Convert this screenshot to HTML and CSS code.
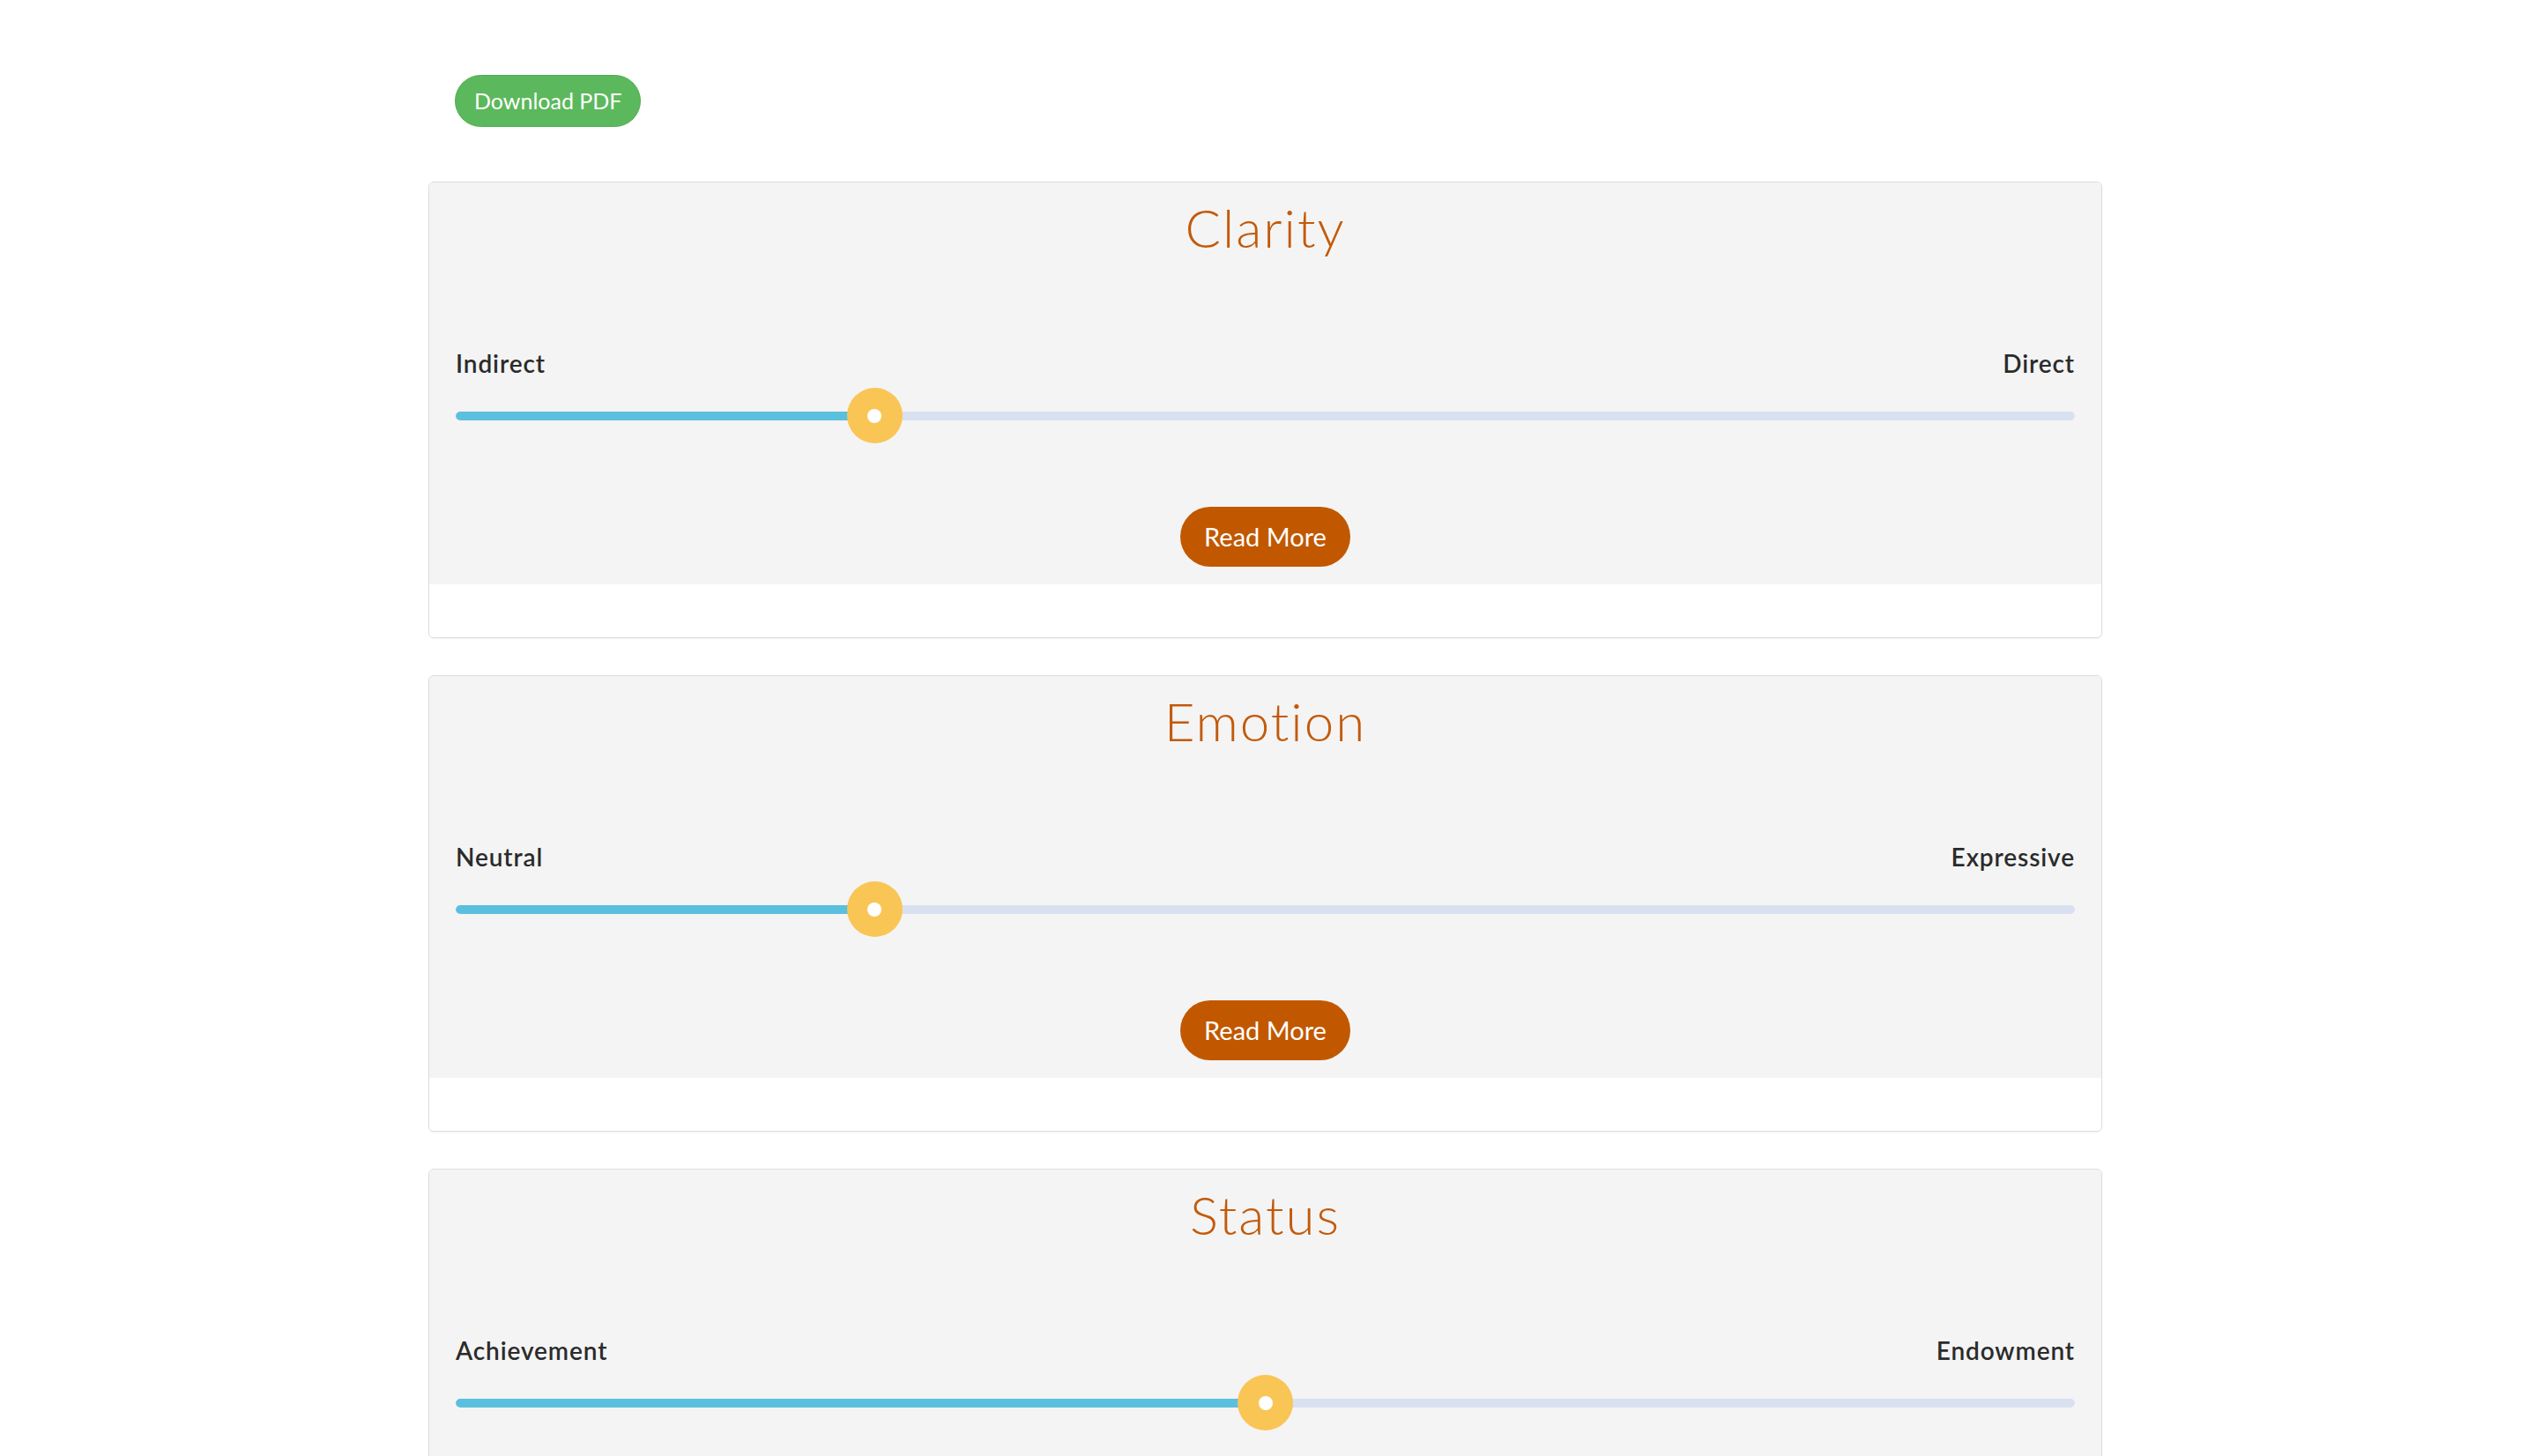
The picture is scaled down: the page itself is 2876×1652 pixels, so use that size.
FILE: index.html
```html
<!DOCTYPE html>
<html lang="en">
<head>
<meta charset="utf-8">
<title>Profile</title>
<link rel="stylesheet" href="styles.css">
</head>
<body>
<div class="container">
  <div class="toolbar">
    <button class="btn-pdf">Download PDF</button>
  </div>

  <div class="card">
    <div class="card-body">
      <h2 class="card-title">Clarity</h2>
      <div class="labels"><span>Indirect</span><span>Direct</span></div>
      <div class="slider" style="--v:0.25">
        <div class="track"><div class="fill"></div></div>
        <div class="thumb"></div>
      </div>
      <div class="actions"><button class="btn-more">Read More</button></div>
    </div>
    <div class="card-foot"></div>
  </div>

  <div class="card">
    <div class="card-body">
      <h2 class="card-title">Emotion</h2>
      <div class="labels"><span>Neutral</span><span>Expressive</span></div>
      <div class="slider" style="--v:0.25">
        <div class="track"><div class="fill"></div></div>
        <div class="thumb"></div>
      </div>
      <div class="actions"><button class="btn-more">Read More</button></div>
    </div>
    <div class="card-foot"></div>
  </div>

  <div class="card">
    <div class="card-body">
      <h2 class="card-title">Status</h2>
      <div class="labels"><span>Achievement</span><span>Endowment</span></div>
      <div class="slider" style="--v:0.5">
        <div class="track"><div class="fill"></div></div>
        <div class="thumb"></div>
      </div>
      <div class="actions"><button class="btn-more">Read More</button></div>
    </div>
    <div class="card-foot"></div>
  </div>
</div>
</body>
</html>
```

FILE: styles.css
```css
html, body {
  margin: 0;
  padding: 0;
  background: #ffffff;
}
body {
  font-family: Lato, "Open Sans", "Liberation Sans", sans-serif;
  color: #2b2b2b;
}
.container {
  width: 1899px;
  margin-left: 486px;
}
.toolbar {
  padding: 85px 0 0 30px;
  height: 59px;
  margin-bottom: 62px;
}
.btn-pdf {
  height: 59px;
  padding: 0 21px;
  border: 1px solid #4cae4c;
  border-radius: 30px;
  background: #5cb85c;
  color: #ffffff;
  font-family: Lato, "Open Sans", sans-serif;
  font-size: 25px;
  line-height: 57px;
  cursor: pointer;
}
.card {
  border: 1px solid #dddddd;
  border-radius: 6px;
  background: #ffffff;
  box-shadow: 0 1px 2px rgba(0,0,0,0.06);
  margin-bottom: 42px;
  overflow: hidden;
}
.card-body {
  background: #f4f4f4;
  padding: 15px 30px 20px 30px;
}
.card-title {
  margin: 0;
  text-align: center;
  font-weight: 300;
  font-size: 60px;
  line-height: 72px;
  letter-spacing: 2px;
  color: #c35a0a;
}
.labels {
  display: flex;
  justify-content: space-between;
  margin-top: 101px;
  font-size: 28px;
  line-height: 34px;
  font-weight: 600;
  letter-spacing: 0.9px;
  color: #2b2b2b;
}
.slider {
  position: relative;
  height: 63px;
  margin-top: 11px;
  display: flex;
  align-items: center;
}
.track {
  width: 100%;
  height: 10px;
  border-radius: 5px;
  background: #d9e1f1;
  overflow: hidden;
}
.fill {
  height: 100%;
  width: calc(31.5px + var(--v) * (100% - 63px));
  background: #5bc0de;
  border-radius: 5px 0 0 5px;
}
.thumb {
  position: absolute;
  top: 0;
  left: calc(var(--v) * (100% - 63px));
  width: 63px;
  height: 63px;
  border-radius: 50%;
  background: #f9c555;
  display: flex;
  align-items: center;
  justify-content: center;
}
.thumb::after {
  content: "";
  width: 16px;
  height: 16px;
  border-radius: 50%;
  background: #ffffff;
}
.actions {
  display: flex;
  justify-content: center;
  margin-top: 72px;
}
.btn-more {
  height: 68px;
  padding: 0 27px;
  border: none;
  border-radius: 34px;
  background: #c15800;
  color: #ffffff;
  font-family: Lato, "Open Sans", sans-serif;
  font-size: 29px;
  line-height: 68px;
  cursor: pointer;
}
.card-foot {
  height: 60px;
  background: #ffffff;
}
```
